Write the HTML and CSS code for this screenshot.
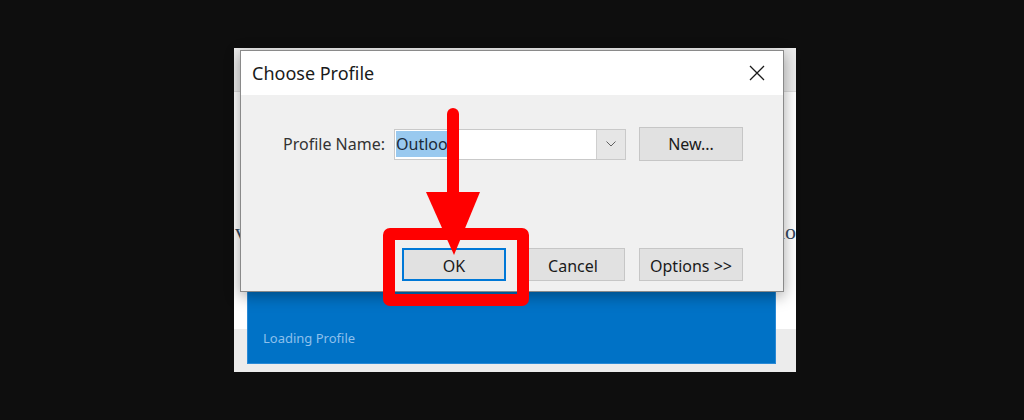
FILE: index.html
```html
<!DOCTYPE html>
<html lang="en">

<head>
    <meta charset="UTF-8">
    <title>Choose Profile</title>
    <link rel="stylesheet" href="styles.css">
</head>

<body>
    <div class="screen">
        <!-- Окно Outlook за диалогом -->
        <div class="app">
            <div class="app-top"></div>
            <div class="app-text"><span>v</span><span>io</span></div>
            <div class="splash">
                <div class="splash-label">Loading Profile</div>
            </div>
        </div>

        <!-- Диалог выбора профиля -->
        <div class="dialog">
            <div class="dialog-title">
                <span>Choose Profile</span>
                <svg class="close-icon" width="16" height="16" viewBox="0 0 16 16">
                    <path d="M1 1 L15 15 M15 1 L1 15" stroke="#1a1a1a" stroke-width="1.3" fill="none" />
                </svg>
            </div>
            <div class="dialog-body">
                <div class="profile-row">
                    <label class="profile-label">Profile Name:</label>
                    <div class="combo">
                        <div class="combo-value"><span class="selected">Outloo</span></div>
                        <div class="combo-button">
                            <svg width="10" height="6" viewBox="0 0 10 6">
                                <path d="M0.5 0.5 L5 5 L9.5 0.5" stroke="#606060" stroke-width="1" fill="none" />
                            </svg>
                        </div>
                    </div>
                    <button class="button">New...</button>
                </div>
                <div class="button-row">
                    <button class="button default-button">OK</button>
                    <button class="button">Cancel</button>
                    <button class="button">Options &gt;&gt;</button>
                </div>
            </div>
        </div>

        <!-- Красная стрелка и рамка -->
        <svg class="arrow" width="66" height="160" viewBox="0 0 66 160">
            <line x1="33" y1="14" x2="33" y2="96" stroke="#ff0000" stroke-width="12" stroke-linecap="round" />
            <polygon points="6,92 60,92 34,155" fill="#ff0000" />
        </svg>
        <div class="highlight"></div>
    </div>
</body>

</html>
```

FILE: styles.css
```css
html,
body {
    margin: 0;
    height: 100%;
}

body {
    background: #0e0e0e;
    padding: 48px 0 0 234px;
    box-sizing: border-box;
    font-family: "Noto Sans", "Open Sans", sans-serif;
}

.screen {
    position: relative;
    width: 562px;
    height: 324px;
}

.app {
    height: 100%;
    display: flex;
    flex-direction: column;
    background: linear-gradient(#ffffff 0, #ffffff 281px, #ececec 281px);
}

.app-top {
    height: 43px;
    background: #ebebeb;
    border-bottom: 1px solid #dcdcdc;
}

.app-text {
    display: flex;
    justify-content: space-between;
    margin-top: 128px;
    padding: 0 0 0 1px;
    font-family: "Liberation Serif", serif;
    font-size: 22px;
    line-height: 24px;
    color: #34495e;
}

.splash {
    flex: 1;
    margin: 22px 20px 8px 13px;
    background: #0072c6;
    border: 1px solid #2a8ad6;
    display: flex;
    align-items: flex-end;
}

.splash-label {
    padding: 0 0 16px 15px;
    font-size: 13px;
    color: #8dc0ec;
}

.dialog {
    position: absolute;
    left: 6px;
    top: 2px;
    width: 544px;
    height: 242px;
    box-sizing: border-box;
    border: 1px solid #8a8a8a;
    background: #f0f0f0;
    box-shadow: 0 4px 14px rgba(0, 0, 0, 0.35);
    display: flex;
    flex-direction: column;
}

.dialog-title {
    height: 44px;
    background: #ffffff;
    display: flex;
    align-items: center;
    justify-content: space-between;
    padding: 0 18px 0 11px;
    font-size: 18px;
    color: #1a1a1a;
}

.close-icon {
    display: block;
}

.dialog-body {
    flex: 1;
    padding: 32px 40px 0 42px;
}

.profile-row {
    display: flex;
    align-items: center;
    height: 34px;
}

.profile-label {
    width: 111px;
    font-size: 16px;
    color: #333333;
}

.combo {
    width: 232px;
    height: 31px;
    box-sizing: border-box;
    border: 1px solid #c9c9c9;
    background: #ffffff;
    display: flex;
    margin-right: 13px;
}

.combo-value {
    flex: 1;
    display: flex;
    align-items: center;
    padding-left: 1px;
}

.selected {
    background: #99c9ef;
    color: #1b2a3a;
    font-size: 16px;
    line-height: 26px;
    padding-right: 1px;
}

.combo-button {
    width: 28px;
    background: #e6e6e6;
    border-left: 1px solid #cfcfcf;
    display: flex;
    align-items: center;
    justify-content: center;
}

.button {
    width: 104px;
    height: 34px;
    box-sizing: border-box;
    background: #e1e1e1;
    border: 1px solid #c6c6c6;
    font-family: inherit;
    font-size: 16px;
    color: #1a1a1a;
    padding: 0;
}

.button-row {
    display: flex;
    justify-content: flex-end;
    gap: 14px;
    margin-top: 87px;
}

.button-row .button {
    height: 33px;
    padding-top: 3px;
}

.default-button {
    border: 2px solid #0078d7;
    margin-right: 1px;
}

.arrow {
    position: absolute;
    left: 186px;
    top: 52px;
}

.highlight {
    position: absolute;
    left: 149px;
    top: 180px;
    width: 146px;
    height: 78px;
    box-sizing: border-box;
    border: 12px solid #ff0000;
    border-radius: 7px;
}
```
